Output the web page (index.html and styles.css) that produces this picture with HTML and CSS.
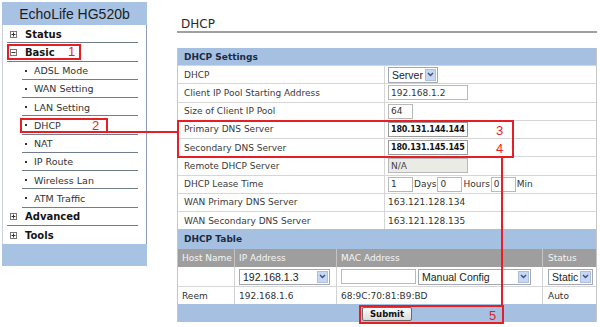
FILE: index.html
```html
<!DOCTYPE html>
<html>
<head>
<meta charset="utf-8">
<title>DHCP</title>
<link rel="stylesheet" href="styles.css">
</head>
<body>
<div class="page">
  <aside class="side">
    <div class="side-head">EchoLife HG520b</div>
    <ul class="menu">
      <li class="top"><svg class="box" width="7" height="7" viewBox="0 0 7 7"><rect x=".5" y=".5" width="6" height="6" fill="#fff" stroke="#777"/><path d="M1.5 3.5h4M3.5 1.5v4" stroke="#333"/></svg>Status</li>
      <li class="top"><svg class="box" width="7" height="7" viewBox="0 0 7 7"><rect x=".5" y=".5" width="6" height="6" fill="#fff" stroke="#777"/><path d="M1.5 3.5h4" stroke="#333"/></svg>Basic</li>
      <li class="sub"><span class="dot"></span>ADSL Mode</li>
      <li class="sub"><span class="dot"></span>WAN Setting</li>
      <li class="sub"><span class="dot"></span>LAN Setting</li>
      <li class="sub"><span class="dot"></span>DHCP</li>
      <li class="sub"><span class="dot"></span>NAT</li>
      <li class="sub"><span class="dot"></span>IP Route</li>
      <li class="sub"><span class="dot"></span>Wireless Lan</li>
      <li class="sub"><span class="dot"></span>ATM Traffic</li>
      <li class="top"><svg class="box" width="7" height="7" viewBox="0 0 7 7"><rect x=".5" y=".5" width="6" height="6" fill="#fff" stroke="#777"/><path d="M1.5 3.5h4M3.5 1.5v4" stroke="#333"/></svg>Advanced</li>
      <li class="top last"><svg class="box" width="7" height="7" viewBox="0 0 7 7"><rect x=".5" y=".5" width="6" height="6" fill="#fff" stroke="#777"/><path d="M1.5 3.5h4M3.5 1.5v4" stroke="#333"/></svg>Tools</li>
    </ul>
    <div class="side-foot"></div>
  </aside>

  <main class="main">
    <h1 class="title">DHCP</h1>

    <section class="panel">
      <div class="band b-set">DHCP Settings</div>
      <div class="row"><div class="lbl">DHCP</div><div class="val"><span class="sel s-server"><span class="st">Server</span><span class="arr"><svg width="7" height="5" viewBox="0 0 7 5"><path d="M1 1l2.5 2.5L6 1" fill="none" stroke="#2f4f8f" stroke-width="1.4"/></svg></span></span></div></div>
      <div class="row"><div class="lbl">Client IP Pool Starting Address</div><div class="val"><span class="inp w80">192.168.1.2</span></div></div>
      <div class="row"><div class="lbl">Size of Client IP Pool</div><div class="val"><span class="inp w25">64</span></div></div>
      <div class="row"><div class="lbl">Primary DNS Server</div><div class="val"><span class="inp w80 bold">180.131.144.144</span></div></div>
      <div class="row"><div class="lbl">Secondary DNS Server</div><div class="val"><span class="inp w80 bold">180.131.145.145</span></div></div>
      <div class="row"><div class="lbl">Remote DHCP Server</div><div class="val"><span class="inp w80 dis">N/A</span></div></div>
      <div class="row"><div class="lbl">DHCP Lease Time</div><div class="val"><span class="inp w25">1</span><span class="unit">Days</span><span class="inp w25">0</span><span class="unit">Hours</span><span class="inp w25">0</span><span class="unit">Min</span></div></div>
      <div class="row"><div class="lbl">WAN Primary DNS Server</div><div class="val txt">163.121.128.134</div></div>
      <div class="row"><div class="lbl">WAN Secondary DNS Server</div><div class="val txt">163.121.128.135</div></div>
    </section>

    <section class="panel">
      <div class="band b-tab">DHCP Table</div>
      <div class="trow thead"><div class="c">Host Name</div><div class="c">IP Address</div><div class="c">MAC Address</div><div class="c">Status</div></div>
      <div class="trow tin">
        <div class="c"></div>
        <div class="c"><span class="sel s-ip"><span class="st">192.168.1.3</span><span class="arr"><svg width="7" height="5" viewBox="0 0 7 5"><path d="M1 1l2.5 2.5L6 1" fill="none" stroke="#2f4f8f" stroke-width="1.4"/></svg></span></span></div>
        <div class="c"><span class="inp w75"></span><span class="sel s-man"><span class="st">Manual Config</span><span class="arr"><svg width="7" height="5" viewBox="0 0 7 5"><path d="M1 1l2.5 2.5L6 1" fill="none" stroke="#2f4f8f" stroke-width="1.4"/></svg></span></span></div>
        <div class="c"><span class="sel s-st"><span class="st">Static</span><span class="arr"><svg width="7" height="5" viewBox="0 0 7 5"><path d="M1 1l2.5 2.5L6 1" fill="none" stroke="#2f4f8f" stroke-width="1.4"/></svg></span></span></div>
      </div>
      <div class="trow tdat"><div class="c">Reem</div><div class="c">192.168.1.6</div><div class="c">68:9C:70:81:B9:BD</div><div class="c">Auto</div></div>
      <div class="band foot"><button class="btn" type="button">Submit</button></div>
    </section>
  </main>

  <div class="notes">
    <div class="rb n-basic"></div><span class="rn t1">1</span>
    <div class="rb n-dhcp"></div><span class="rn t2">2</span>
    <div class="rl l-h"></div>
    <div class="rb n-dns"></div><span class="rn t3">3</span><span class="rn t4">4</span>
    <div class="rl l-v"></div>
    <div class="rb n-sub"></div><span class="rn t5">5</span>
  </div>
</div>
</body>
</html>
```
FILE: styles.css
```css
* { box-sizing: border-box; }
html, body { margin: 0; padding: 0; background: #fff; }
body { font-family: "DejaVu Sans", Verdana, sans-serif; color: #333; }

.page { position: relative; display: flex; align-items: flex-start; width: 600px; height: 327px; overflow: hidden; }

/* ---------- sidebar ---------- */
.side { width: 145px; margin: 2px 0 0 2px; }
.side-head {
  height: 23px; background: #a8c2e4;
  font: 14px "Liberation Sans", Arial, sans-serif; color: #1c1c1c;
  text-align: center; line-height: 24px;
}
.menu {
  list-style: none; margin: 0; padding: 0 8px 0 4px;
  border-left: 1px solid #c9d2de; border-right: 1px solid #8d9db4;
}
.menu li {
  height: 18.25px; border-bottom: 1px solid #6f7d8f; padding-top: 1px;
  display: flex; align-items: center; font-size: 9.5px; white-space: nowrap;
}
.menu li.last { border-bottom: 0; }
.top { font-weight: bold; font-size: 10px !important; color: #151515; padding-left: 3px; }
.top .box { margin-right: 8px; flex: none; }
.sub { margin-left: 15px; padding-left: 3px; color: #333; }
.dot { width: 2px; height: 2px; background: #333; margin-right: 7px; flex: none; }
.side-foot { height: 22px; background: #a8c2e4; }

/* ---------- main ---------- */
.main { width: 420px; margin-left: 30px; }
.title {
  margin: 17px 0 0; height: 16px; font-size: 12px; font-weight: normal; line-height: 14px;
  color: #2a2a2a; border-bottom: 2px solid #a0a0a0; padding-left: 4px;
}
.panel { border-left: 1px solid #c6c6c6; border-right: 1px solid #c6c6c6; }
.panel:first-of-type { margin-top: 15px; }

.band {
  background: #a6c0e2; font-size: 9px; font-weight: bold; color: #1b2a40;
  padding-left: 6px; display: flex; align-items: center;
}
.b-set { height: 17px; }
.b-tab { height: 20px; }
.foot { height: 18px; justify-content: center; padding-left: 0; }

.row { display: grid; grid-template-columns: 207px 1fr; height: 18.25px; border-top: 1px solid #d6d6d6; font-size: 9px; }
.lbl { border-right: 1px solid #d6d6d6; padding-left: 6px; display: flex; align-items: center; color: #3a3a3a; white-space: nowrap; }
.val { padding-left: 3px; display: flex; align-items: center; color: #333; }

.inp {
  display: inline-flex; align-items: center; height: 15px; border: 1px solid #b9b9b9;
  background: #fff; font-size: 9px; padding-left: 2px; color: #333; flex: none; white-space: nowrap; overflow: hidden;
}
.inp.bold { font-weight: bold; color: #111; border-color: #9a9a9a; font-size: 8px; letter-spacing: -0.15px; padding-left: 2px; }
.inp.dis { background: #ebebe6; color: #444; }
.w80 { width: 80px; }
.w75 { width: 75px; }
.w25 { width: 25px; }
.unit { font-size: 9px; color: #333; padding: 0 1px 0 1px; }

.sel {
  display: inline-flex; align-items: center; justify-content: space-between; height: 16px;
  border: 1px solid #a3a9b4; background: #fff; flex: none;
  font: 10.5px "Liberation Sans", Arial, sans-serif; color: #222; padding-left: 3px;
}
.arr {
  width: 11px; height: 12px; margin-right: 1px; background: #c9d8f0; border: 1px solid #aebfdc;
  display: flex; align-items: center; justify-content: center;
}
.s-server { width: 50px; }
.s-ip { width: 91px; }
.s-man { width: 113px; margin-left: 2px; }
.s-st { width: 45px; }

/* DHCP table */
.trow { display: grid; grid-template-columns: 57px 102px 206px 1fr; font-size: 9px; }
.trow .c { border-right: 1px solid #d2d2d2; display: flex; align-items: center; padding-left: 4px; white-space: nowrap; }
.trow .c:last-child { border-right: 0; padding-left: 5px; }
.thead { height: 18px; background: #9e9e9e; color: #f5f5f5; }
.thead .c { border-right-color: #c4c4c4; }
.tin { height: 19px; }
.tdat { height: 18px; border-top: 1px solid #d6d6d6; color: #333; }

.btn {
  width: 50px; height: 14px; padding: 0; margin-top: 1px;
  border: 1px solid #6a6a6a; border-radius: 2px;
  background: linear-gradient(#fbfbfb, #dcdcdc);
  font: bold 8.5px "DejaVu Sans", Verdana, sans-serif; color: #111;
}

/* ---------- annotations ---------- */
.notes { position: absolute; left: 0; top: 0; width: 600px; height: 327px; pointer-events: none; }
.rb { position: absolute; border: 2px solid #e61f26; }
.rl { position: absolute; background: #e61f26; }
.rn { position: absolute; font: 13px "Liberation Sans", Arial, sans-serif; color: #e61f26; line-height: 13px; }

.n-basic { left: 7px; top: 44px; width: 74px; height: 16px; }
.t1 { left: 68px; top: 45px; }
.n-dhcp { left: 20px; top: 118px; width: 88px; height: 15px; }
.t2 { left: 92px; top: 119px; }
.l-h { left: 106px; top: 131px; width: 72px; height: 2px; }
.n-dns { left: 177px; top: 120px; width: 337px; height: 38px; }
.t3 { left: 496px; top: 124px; }
.t4 { left: 496px; top: 142px; }
.l-v { left: 501px; top: 156px; width: 2px; height: 150px; }
.n-sub { left: 359px; top: 305px; width: 145px; height: 19px; }
.t5 { left: 489px; top: 309px; }
```
